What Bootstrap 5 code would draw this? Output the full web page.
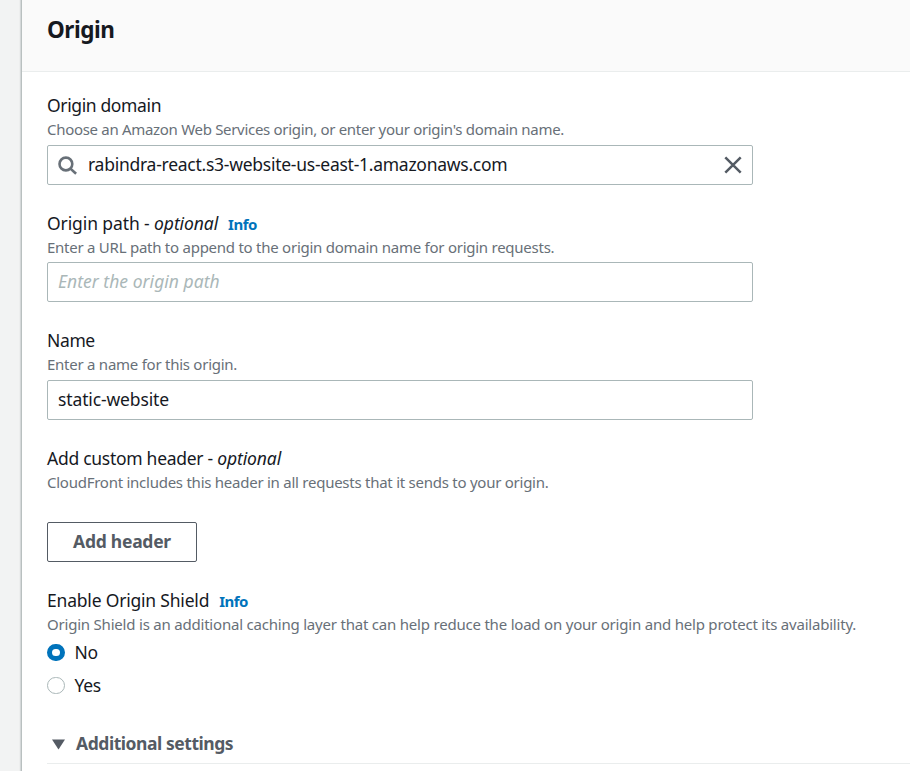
<!DOCTYPE html>
<html lang="en">
<head>
<meta charset="utf-8">
<meta name="viewport" content="width=device-width, initial-scale=1">
<title>Origin</title>
<link href="https://cdn.jsdelivr.net/npm/bootstrap@5.3.0/dist/css/bootstrap.min.css" rel="stylesheet">
<style>
body{font-family:"Noto Sans",sans-serif;color:#16191f;background:#f2f3f3;font-size:17.5px;line-height:27.5px;height:771px;overflow:hidden}
.panel{margin-left:21px;height:771px;border:0;border-left:1px solid #b9c0c0;border-radius:0;box-shadow:-1px 0 1px rgba(0,28,36,.12);color:inherit}
.panel .panel-head{height:72px;background:#fafafa;border-bottom:1px solid #eaeded;padding:15px 25px 0;border-radius:0}
.panel-head h2{font-size:22.5px;line-height:30px;letter-spacing:-.45px}
.panel-main{padding:20.2px 0 0 25px}
.field{width:706px;margin-bottom:25px}
.title{letter-spacing:-.2px;height:27.5px}
.title-path{letter-spacing:-.1px}
.title-tight{letter-spacing:-.37px}
.title-header{letter-spacing:-.28px}
.title em{letter-spacing:-.1px}
.hint{font-size:15px;line-height:20px;margin-top:-.5px;padding-bottom:.5px;color:#687078;letter-spacing:-.253px;white-space:nowrap}
.hint-first{letter-spacing:-.307px}
.hint-long{letter-spacing:-.208px}
.info{font-size:15px;font-weight:700;color:#0073bb;text-decoration:none;letter-spacing:-.5px;margin-left:10px}
.entry{height:40px;margin-top:5px;border:1px solid #aab7b8;border-radius:2px;background:#fff;padding:0 10px}
.entry .form-control{border:0;padding:0;border-radius:0;background:transparent;color:#16191f;font-size:17.5px;line-height:27.5px;letter-spacing:-.13px;box-shadow:none}
.entry .domain{letter-spacing:-.26px;margin-left:10px}
.entry .form-control::placeholder{color:#aab7b8;font-style:italic;letter-spacing:.03px;opacity:1}
.glyph-search{margin-top:2px}
.btn-outline{width:150px;height:40px;margin-top:29.5px;padding:0 0 2px;border:1px solid #545b64;border-radius:2px;color:#545b64;font-size:17.5px;font-weight:700;letter-spacing:-.25px}
.choices{padding-top:2px}
.choice{height:33px;letter-spacing:-.3px}
.choice .form-check-input{width:17.5px;height:17.5px;margin:0 10px 0 0;border:1.5px solid #aab7b8;float:none}
.choice .form-check-input:checked{border:5.5px solid #0073bb;background:#fff}
.more{color:#545b64;height:40px;margin-top:21.5px;border-bottom:1px solid #eaeded;padding:2px 0 0 5px;letter-spacing:-.45px}
.more svg{margin-right:11px}
</style>
</head>
<body>
<main class="card panel">
  <header class="card-header panel-head"><h2 class="fw-bold m-0">Origin</h2></header>
  <form class="panel-main">
    <div class="field">
      <label class="d-block title title-tight" for="domain">Origin domain</label>
      <div class="hint hint-first">Choose an Amazon Web Services origin, or enter your origin's domain name.</div>
      <div class="entry d-flex align-items-center">
        <svg width="20" height="20" viewBox="0 0 20 20" fill="none" stroke="#687078" stroke-width="2.6" class="flex-shrink-0 glyph-search"><circle cx="7.9" cy="8" r="6.4"/><path d="M12.5 12.6l5.6 5.2"/></svg>
        <input id="domain" class="form-control domain" value="rabindra-react.s3-website-us-east-1.amazonaws.com">
        <svg width="18" height="18" viewBox="0 0 18 18" fill="none" stroke="#545b64" stroke-width="2.5" class="flex-shrink-0"><path d="M1.3 1.3l15.4 15.4M16.7 1.3L1.3 16.7"/></svg>
      </div>
    </div>
    <div class="field">
      <label class="d-block title title-path" for="path">Origin path - <em>optional</em><a class="info" href="#">Info</a></label>
      <div class="hint">Enter a URL path to append to the origin domain name for origin requests.</div>
      <div class="entry d-flex align-items-center"><input id="path" class="form-control" placeholder="Enter the origin path"></div>
    </div>
    <div class="field">
      <label class="d-block title title-tight" for="name">Name</label>
      <div class="hint">Enter a name for this origin.</div>
      <div class="entry d-flex align-items-center"><input id="name" class="form-control" value="static-website"></div>
    </div>
    <div class="field">
      <div class="title title-header">Add custom header - <em>optional</em></div>
      <div class="hint">CloudFront includes this header in all requests that it sends to your origin.</div>
      <button type="button" class="btn btn-outline d-block">Add header</button>
    </div>
    <div class="title">Enable Origin Shield<a class="info" href="#">Info</a></div>
    <div class="hint hint-long">Origin Shield is an additional caching layer that can help reduce the load on your origin and help protect its availability.</div>
    <div class="choices">
      <label class="choice d-flex align-items-center form-check p-0 m-0"><input class="form-check-input" type="radio" name="shield" checked>No</label>
      <label class="choice d-flex align-items-center form-check p-0 m-0"><input class="form-check-input" type="radio" name="shield">Yes</label>
    </div>
    <div class="more d-flex align-items-center fw-bold">
      <svg width="13" height="11" viewBox="0 0 13 11"><path d="M0 0.4h13L6.5 10.6z" fill="#545b64"/></svg>
      <span>Additional settings</span>
    </div>
  </form>
</main>
<script src="https://cdn.jsdelivr.net/npm/bootstrap@5.3.0/dist/js/bootstrap.bundle.min.js"></script>
</body>
</html>
